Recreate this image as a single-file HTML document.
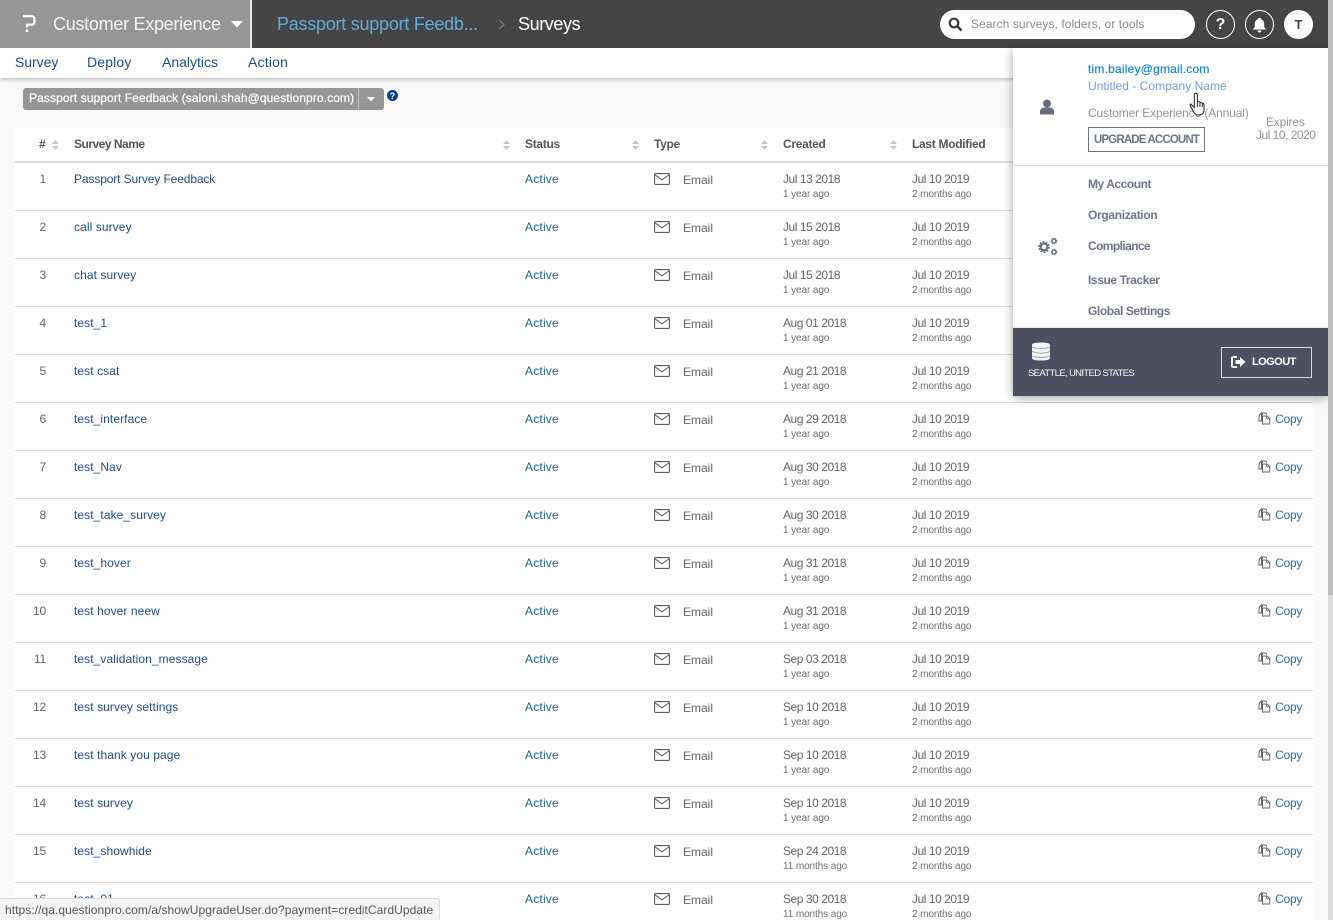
<!DOCTYPE html>
<html lang="en">
<head>
<meta charset="utf-8">
<title>Surveys</title>
<style>
*{box-sizing:border-box}
html,body{margin:0;padding:0;width:1333px;height:920px;overflow:hidden;background:#f9f9f9;font-family:"Liberation Sans",sans-serif;font-size:12px;color:#545e6b}
.a{position:absolute;white-space:nowrap}
#hdr{position:absolute;left:0;top:0;width:1333px;height:48px;background:#454545}
#nav{position:absolute;left:0;top:48px;width:1333px;height:30px;background:#fff;box-shadow:0 1px 4px rgba(0,0,0,.3)}
#tbl{position:absolute;left:15px;top:128px;width:1298px;height:792px;background:#fff;overflow:hidden}
.r{position:absolute;left:0;width:1298px;height:48px;border-bottom:1px solid #dedede}
.r span,.r svg{position:absolute;white-space:nowrap}
.n{right:1267px;top:9px;line-height:14px;color:#5f6670;letter-spacing:-.2px}
.t{left:59px;top:9px;line-height:14px;color:#1b4c8c;letter-spacing:.08px}
.s{left:510px;top:9px;line-height:14px;color:#1b5a9c;letter-spacing:.2px}
.e{left:668px;top:10px;line-height:14px;color:#5f6670;letter-spacing:0}
.c,.m{top:9px;line-height:14px;color:#5f6670;letter-spacing:-.45px}
.c{left:768px}.m{left:897px}
.c2,.m2{top:26px;font-size:10px;line-height:12px;color:#6a6f76;letter-spacing:-.1px}
.c2{left:768px}.m2{left:897px}
.k{left:1260px;top:9px;line-height:14px;color:#2a69ac;letter-spacing:-.2px}
.v{left:639px;top:10px}
.o{left:1243px;top:9px}
.th{position:absolute;top:9px;font-weight:bold;line-height:14px;color:#555;letter-spacing:-.3px}
.srt{position:absolute;top:12px}
.ml{position:absolute;left:1088px;font-weight:bold;line-height:14px;color:#6e7686;letter-spacing:-.45px}
.ic{position:absolute;border-radius:50%;width:29px;height:29px;top:10px;border:1px solid #fff}
</style>
</head>
<body>
<svg width="0" height="0" style="position:absolute">
<defs>
<symbol id="env" viewBox="0 0 16 12"><rect x=".6" y=".6" width="14.8" height="10.8" rx="1" fill="none" stroke="#6b5470" stroke-width="1.1"/><path d="M1 1.8l7 5L15 1.8" fill="none" stroke="#6b5470" stroke-width="1.1"/></symbol>
<symbol id="cpy" viewBox="0 0 13 13"><path d="M4.5 3V1H8L8.5 3M1 3.5L3.5 1V9H1Z" fill="none" stroke="#666" stroke-width="1"/><path d="M4.5 4H9L11.7 6.5V12H4.5Z" fill="none" stroke="#666" stroke-width="1"/><path d="M8.5 4.3V6.8H11.5" fill="none" stroke="#666" stroke-width=".8"/></symbol>
<symbol id="sort" viewBox="0 0 7 10"><path d="M3.5 0L7 4H0ZM3.5 10L0 6H7Z" fill="#c4c4c4"/></symbol>
<symbol id="gear" viewBox="0 0 24 24"><circle cx="12" cy="12" r="8" fill="none" stroke="#666d7a" stroke-width="4" stroke-dasharray="3 2.03"/><circle cx="12" cy="12" r="5.7" fill="none" stroke="#666d7a" stroke-width="3.4"/></symbol>
</defs>
</svg>

<div id="tbl">
<span class="th" style="left:24px">#</span><svg class="srt" style="left:37px" width="7" height="10"><use href="#sort"/></svg>
<span class="th" style="left:59px;letter-spacing:-.5px">Survey Name</span><svg class="srt" style="left:488px" width="7" height="10"><use href="#sort"/></svg>
<span class="th" style="left:510px">Status</span><svg class="srt" style="left:617px" width="7" height="10"><use href="#sort"/></svg>
<span class="th" style="left:639px">Type</span><svg class="srt" style="left:746px" width="7" height="10"><use href="#sort"/></svg>
<span class="th" style="left:768px">Created</span><svg class="srt" style="left:875px" width="7" height="10"><use href="#sort"/></svg>
<span class="th" style="left:897px">Last Modified</span>
<div style="position:absolute;left:0;top:33px;width:1298px;height:2px;background:#dcdcdc"></div>

<div class="r" style="top:35px"><span class="n">1</span><span class="t" style="letter-spacing:-.12px">Passport Survey Feedback</span><span class="s">Active</span><svg class="v" width="16" height="12"><use href="#env"/></svg><span class="e">Email</span><span class="c">Jul 13 2018</span><span class="c2">1 year ago</span><span class="m">Jul 10 2019</span><span class="m2">2 months ago</span></div>
<div class="r" style="top:83px"><span class="n">2</span><span class="t">call survey</span><span class="s">Active</span><svg class="v" width="16" height="12"><use href="#env"/></svg><span class="e">Email</span><span class="c">Jul 15 2018</span><span class="c2">1 year ago</span><span class="m">Jul 10 2019</span><span class="m2">2 months ago</span></div>
<div class="r" style="top:131px"><span class="n">3</span><span class="t">chat survey</span><span class="s">Active</span><svg class="v" width="16" height="12"><use href="#env"/></svg><span class="e">Email</span><span class="c">Jul 15 2018</span><span class="c2">1 year ago</span><span class="m">Jul 10 2019</span><span class="m2">2 months ago</span></div>
<div class="r" style="top:179px"><span class="n">4</span><span class="t">test_1</span><span class="s">Active</span><svg class="v" width="16" height="12"><use href="#env"/></svg><span class="e">Email</span><span class="c">Aug 01 2018</span><span class="c2">1 year ago</span><span class="m">Jul 10 2019</span><span class="m2">2 months ago</span></div>
<div class="r" style="top:227px"><span class="n">5</span><span class="t">test csat</span><span class="s">Active</span><svg class="v" width="16" height="12"><use href="#env"/></svg><span class="e">Email</span><span class="c">Aug 21 2018</span><span class="c2">1 year ago</span><span class="m">Jul 10 2019</span><span class="m2">2 months ago</span></div>
<div class="r" style="top:275px"><span class="n">6</span><span class="t">test_interface</span><span class="s">Active</span><svg class="v" width="16" height="12"><use href="#env"/></svg><span class="e">Email</span><span class="c">Aug 29 2018</span><span class="c2">1 year ago</span><span class="m">Jul 10 2019</span><span class="m2">2 months ago</span><svg class="o" width="13" height="13"><use href="#cpy"/></svg><span class="k">Copy</span></div>
<div class="r" style="top:323px"><span class="n">7</span><span class="t">test_Nav</span><span class="s">Active</span><svg class="v" width="16" height="12"><use href="#env"/></svg><span class="e">Email</span><span class="c">Aug 30 2018</span><span class="c2">1 year ago</span><span class="m">Jul 10 2019</span><span class="m2">2 months ago</span><svg class="o" width="13" height="13"><use href="#cpy"/></svg><span class="k">Copy</span></div>
<div class="r" style="top:371px"><span class="n">8</span><span class="t">test_take_survey</span><span class="s">Active</span><svg class="v" width="16" height="12"><use href="#env"/></svg><span class="e">Email</span><span class="c">Aug 30 2018</span><span class="c2">1 year ago</span><span class="m">Jul 10 2019</span><span class="m2">2 months ago</span><svg class="o" width="13" height="13"><use href="#cpy"/></svg><span class="k">Copy</span></div>
<div class="r" style="top:419px"><span class="n">9</span><span class="t">test_hover</span><span class="s">Active</span><svg class="v" width="16" height="12"><use href="#env"/></svg><span class="e">Email</span><span class="c">Aug 31 2018</span><span class="c2">1 year ago</span><span class="m">Jul 10 2019</span><span class="m2">2 months ago</span><svg class="o" width="13" height="13"><use href="#cpy"/></svg><span class="k">Copy</span></div>
<div class="r" style="top:467px"><span class="n">10</span><span class="t">test hover neew</span><span class="s">Active</span><svg class="v" width="16" height="12"><use href="#env"/></svg><span class="e">Email</span><span class="c">Aug 31 2018</span><span class="c2">1 year ago</span><span class="m">Jul 10 2019</span><span class="m2">2 months ago</span><svg class="o" width="13" height="13"><use href="#cpy"/></svg><span class="k">Copy</span></div>
<div class="r" style="top:515px"><span class="n">11</span><span class="t">test_validation_message</span><span class="s">Active</span><svg class="v" width="16" height="12"><use href="#env"/></svg><span class="e">Email</span><span class="c">Sep 03 2018</span><span class="c2">1 year ago</span><span class="m">Jul 10 2019</span><span class="m2">2 months ago</span><svg class="o" width="13" height="13"><use href="#cpy"/></svg><span class="k">Copy</span></div>
<div class="r" style="top:563px"><span class="n">12</span><span class="t">test survey settings</span><span class="s">Active</span><svg class="v" width="16" height="12"><use href="#env"/></svg><span class="e">Email</span><span class="c">Sep 10 2018</span><span class="c2">1 year ago</span><span class="m">Jul 10 2019</span><span class="m2">2 months ago</span><svg class="o" width="13" height="13"><use href="#cpy"/></svg><span class="k">Copy</span></div>
<div class="r" style="top:611px"><span class="n">13</span><span class="t">test thank you page</span><span class="s">Active</span><svg class="v" width="16" height="12"><use href="#env"/></svg><span class="e">Email</span><span class="c">Sep 10 2018</span><span class="c2">1 year ago</span><span class="m">Jul 10 2019</span><span class="m2">2 months ago</span><svg class="o" width="13" height="13"><use href="#cpy"/></svg><span class="k">Copy</span></div>
<div class="r" style="top:659px"><span class="n">14</span><span class="t">test survey</span><span class="s">Active</span><svg class="v" width="16" height="12"><use href="#env"/></svg><span class="e">Email</span><span class="c">Sep 10 2018</span><span class="c2">1 year ago</span><span class="m">Jul 10 2019</span><span class="m2">2 months ago</span><svg class="o" width="13" height="13"><use href="#cpy"/></svg><span class="k">Copy</span></div>
<div class="r" style="top:707px"><span class="n">15</span><span class="t">test_showhide</span><span class="s">Active</span><svg class="v" width="16" height="12"><use href="#env"/></svg><span class="e">Email</span><span class="c">Sep 24 2018</span><span class="c2">11 months ago</span><span class="m">Jul 10 2019</span><span class="m2">2 months ago</span><svg class="o" width="13" height="13"><use href="#cpy"/></svg><span class="k">Copy</span></div>
<div class="r" style="top:755px;height:37px;border:0;overflow:hidden"><span class="n">16</span><span class="t">test_01</span><span class="s">Active</span><svg class="v" width="16" height="12"><use href="#env"/></svg><span class="e">Email</span><span class="c">Sep 30 2018</span><span class="c2">11 months ago</span><span class="m">Jul 10 2019</span><span class="m2">2 months ago</span><svg class="o" width="13" height="13"><use href="#cpy"/></svg><span class="k">Copy</span></div>
</div>

<div class="a" style="left:23px;top:88px;width:361px;height:22px;background:#969696;border-radius:3px"></div>
<div class="a" style="left:29px;top:91px;font-weight:normal;line-height:15px;color:#fff;letter-spacing:.1px;-webkit-text-stroke:.2px #fff">Passport support Feedback (saloni.shah@questionpro.com)</div>
<div class="a" style="left:358px;top:88px;width:1px;height:22px;background:#c4c4c4"></div>
<svg class="a" style="left:367px;top:97px" width="8" height="5"><path d="M0 0H8L4 4.5Z" fill="#fff"/></svg>
<svg class="a" style="left:387px;top:90px" width="11" height="11"><circle cx="5.5" cy="5.5" r="5.5" fill="#0b3e8f"/><text x="5.5" y="9" text-anchor="middle" font-family="Liberation Sans" font-size="9" font-weight="bold" fill="#fff">?</text></svg>

<div id="nav"></div>
<div class="a" style="left:15px;top:53px;font-size:14px;line-height:18px;color:#1b4c8c;letter-spacing:-.05px">Survey</div>
<div class="a" style="left:87px;top:53px;font-size:14px;line-height:18px;color:#1b4c8c;letter-spacing:.15px">Deploy</div>
<div class="a" style="left:162px;top:53px;font-size:14px;line-height:18px;color:#1b4c8c;letter-spacing:0">Analytics</div>
<div class="a" style="left:248px;top:53px;font-size:14px;line-height:18px;color:#1b4c8c;letter-spacing:.2px">Action</div>

<div id="hdr">
<div class="a" style="left:0;top:0;width:250px;height:48px;background:#969696"></div>
<div class="a" style="left:250px;top:0;width:2px;height:48px;background:#e4e4e4"></div>
<svg class="a" style="left:22px;top:15px" width="14" height="18"><path d="M1 1.2H9.5Q12.5 1.2 12.5 4.5V6.5Q12.5 9.7 9.5 9.7H5V12.5" fill="none" stroke="#fff" stroke-width="2.2"/><rect x="3.8" y="14.5" width="2.4" height="2.6" fill="#fff"/></svg>
<div class="a" style="left:53px;top:13px;font-size:18px;line-height:22px;color:#eef3f5;letter-spacing:-.28px">Customer Experience</div>
<svg class="a" style="left:231px;top:21px" width="12" height="7"><path d="M0 0H12L6 6.5Z" fill="#fff"/></svg>
<div class="a" style="left:277px;top:13px;font-size:18px;line-height:22px;color:#62aad8;letter-spacing:-.25px">Passport support Feedb...</div>
<svg class="a" style="left:498px;top:19px" width="7" height="11"><path d="M1 1L6 5.5L1 10" fill="none" stroke="#777" stroke-width="1.2"/></svg>
<div class="a" style="left:518px;top:13px;font-size:18px;line-height:22px;color:#fff;letter-spacing:-.4px">Surveys</div>

<div class="a" style="left:940px;top:10px;width:255px;height:29px;background:#fff;border-radius:15px"></div>
<svg class="a" style="left:948px;top:17px" width="15" height="15"><circle cx="6" cy="6" r="4.3" fill="none" stroke="#3d3d3d" stroke-width="2.2"/><path d="M9.2 9.2L13.5 13.5" stroke="#3d3d3d" stroke-width="2.6"/></svg>
<div class="a" style="left:971px;top:17px;line-height:15px;color:#8a8a8a;letter-spacing:.06px">Search surveys, folders, or tools</div>

<div class="ic" style="left:1206px"></div>
<div class="a" style="left:1206px;top:14px;width:29px;text-align:center;font-size:16px;font-weight:bold;line-height:21px;color:#fff">?</div>
<div class="ic" style="left:1245px"></div>
<svg class="a" style="left:1252px;top:17px" width="15" height="16"><path d="M7.5 0.8Q9 .8 9.2 2.2Q12.2 3.4 12.2 7V10L14 12.5H1L2.8 10V7Q2.8 3.4 5.8 2.2Q6 .8 7.5 .8ZM5.5 13.5H9.5Q9 15.5 7.5 15.5Q6 15.5 5.5 13.5Z" fill="#fff"/></svg>
<div class="ic" style="left:1284px;background:#fff"></div>
<div class="a" style="left:1284px;top:14px;width:29px;text-align:center;font-size:13px;font-weight:bold;line-height:21px;color:#444">T</div>
</div>

<div class="a" style="left:1013px;top:48px;width:315px;height:348px;background:#fff;box-shadow:0 2px 10px rgba(0,0,0,.35)"></div>
<div class="a" style="left:1088px;top:62px;line-height:15px;color:#1787d8;letter-spacing:.2px;-webkit-text-stroke:.2px #1787d8">tim.bailey@gmail.com</div>
<div class="a" style="left:1088px;top:79px;line-height:15px;color:#6f9fe0;letter-spacing:.03px">Untitled - Company Name</div>
<div class="a" style="left:1088px;top:106px;line-height:15px;color:#8e949c;letter-spacing:-.12px">Customer Experience (Annual)</div>
<div class="a" style="left:1266px;top:115px;line-height:15px;color:#8e949c;letter-spacing:-.2px">Expires</div>
<div class="a" style="left:1256px;top:128px;line-height:15px;color:#8e949c;letter-spacing:-.5px">Jul 10, 2020</div>
<div class="a" style="left:1088px;top:127px;width:117px;height:25px;border:1px solid #6e7686"></div>
<div class="a" style="left:1094px;top:133px;font-size:11.5px;font-weight:bold;line-height:15px;color:#6e7686;letter-spacing:-.85px">UPGRADE ACCOUNT</div>
<div class="a" style="left:1013px;top:165px;width:315px;height:1px;background:#dedede"></div>
<svg class="a" style="left:1040px;top:99px" width="14" height="16"><circle cx="7" cy="4.5" r="4" fill="#666d7a"/><path d="M0 15.5V12.5Q0 9 4 8.5H10Q14 9 14 12.5V15.5Z" fill="#666d7a"/></svg>
<div class="ml" style="top:177px">My Account</div>
<div class="ml" style="top:208px;letter-spacing:-.33px">Organization</div>
<div class="ml" style="top:239px;letter-spacing:-.6px">Compliance</div>
<div class="ml" style="top:273px;letter-spacing:-.4px">Issue Tracker</div>
<div class="ml" style="top:304px;letter-spacing:-.4px">Global Settings</div>
<svg class="a" style="left:1037px;top:237px" width="21" height="19"><use href="#gear" x="0" y="3" width="14" height="14"/><use href="#gear" x="13" y="0" width="8" height="8"/><use href="#gear" x="13" y="11" width="8" height="8"/></svg>

<div class="a" style="left:1013px;top:328px;width:315px;height:68px;background:#4d5060;box-shadow:0 -1px 2px rgba(0,0,0,.12)"></div>
<svg class="a" style="left:1032px;top:342px" width="18" height="19"><path d="M0 3Q0 .5 9 .5Q18 .5 18 3V16Q18 18.5 9 18.5Q0 18.5 0 16Z" fill="#f2f4f7"/><path d="M0 5Q9 8.5 18 5M0 9.5Q9 13 18 9.5M0 14Q9 17 18 14" fill="none" stroke="#8a8e9a" stroke-width=".8"/></svg>
<div class="a" style="left:1028px;top:367px;font-size:9.5px;line-height:14px;color:#f2f2f2;letter-spacing:-.65px">SEATTLE, UNITED STATES</div>
<div class="a" style="left:1221px;top:347px;width:91px;height:31px;border:1px solid #d8d8d8"></div>
<svg class="a" style="left:1231px;top:356px" width="15" height="13"><path d="M6 1H2Q1 1 1 2V10Q1 11 2 11H6" fill="none" stroke="#fff" stroke-width="1.8"/><path d="M4.5 4H9V1L14.5 6L9 11V8H4.5Z" fill="#fff"/></svg>
<div class="a" style="left:1252px;top:355px;font-size:11px;font-weight:bold;line-height:15px;color:#fff;letter-spacing:-.55px">LOGOUT</div>

<svg class="a" style="left:1189px;top:92px" width="17" height="25"><path d="M5.3 15.5L2.2 12.3Q.9 11.4 1 13L4.6 20Q6.3 23 9.3 23Q14.8 23 15 18V12.8Q15 11 13.4 11.5Q12.5 9.8 11 10.6Q10 8.9 8.4 9.9V3Q8.2 1.2 6.8 1.2Q5.3 1.2 5.3 3Z" fill="#fff" stroke="#222" stroke-width="1"/><path d="M8.4 10V15M11 10.6V15M13.4 11.5V15" stroke="#222" stroke-width=".9"/></svg>

<div class="a" style="left:0;top:898px;width:440px;height:22px;background:#f4f4f4;border:1px solid #dcdcdc;border-left:0;border-bottom:0;border-top-right-radius:3px"></div>
<div class="a" style="left:5px;top:903px;line-height:14px;color:#555;letter-spacing:.06px">https://qa.questionpro.com/a/showUpgradeUser.do?payment=creditCardUpdate</div>

<div class="a" style="left:1328px;top:0;width:5px;height:920px;background:#dcdcdc"></div>
<div class="a" style="left:1328px;top:0;width:5px;height:595px;background:#bdbdbd"></div>
</body>
</html>
